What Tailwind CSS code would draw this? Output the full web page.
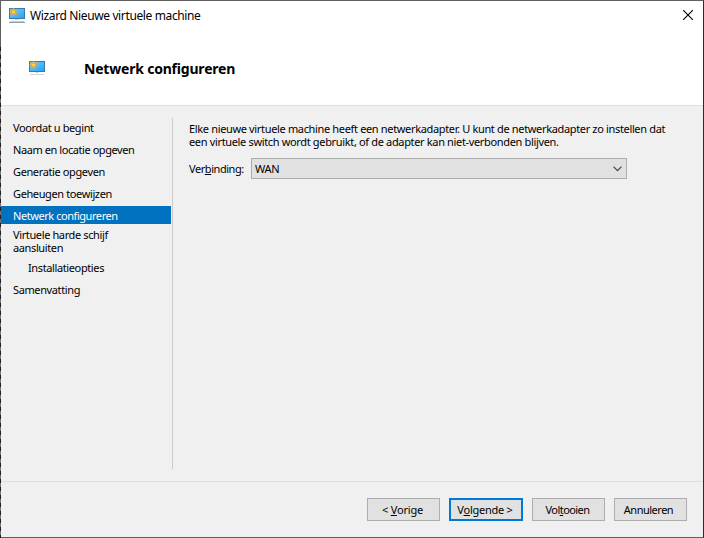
<!DOCTYPE html>
<html lang="nl"><head><meta charset="utf-8"><title>Wizard Nieuwe virtuele machine</title>
<script src="https://cdn.jsdelivr.net/npm/@tailwindcss/browser@4"></script></head>
<body class="overflow-hidden">
<div class="relative flex h-[538px] w-[704px] flex-col border border-[#5f5f5f] border-r-[#2b2b2b] bg-[#f0f0f0] font-['Noto_Sans',sans-serif] text-[11px] leading-[13px] text-black">
  <div class="absolute -left-px top-[46px] h-[491px] w-px bg-[repeating-linear-gradient(180deg,#1c1a1c_0px,#1c1a1c_4px,#757575_4px,#757575_8px)]"></div>
  <header class="h-[105px] shrink-0 border-b border-[#dfdfdf] bg-white">
    <div class="flex h-[29px] items-center pl-2">
      <svg class="mb-px h-4 w-4" viewBox="0 0 16 16"><defs><linearGradient id="s" x1="0" y1="0" x2="1" y2="1"><stop offset="0" stop-color="#7accf8"/><stop offset="1" stop-color="#1ea4fb"/></linearGradient></defs><path d="M0 1h16v11H0z" fill="#3c789f"/><path d="M1 2h14v9H1z" fill="url(#s)"/><path d="M6 12h4v1H6z" fill="#c5ced5"/><path d="M1 14h14v1H1z" fill="#c3ccd3"/><path d="M0 15h16v1H0z" fill="#8da0af"/><path d="M4.500 1v8M.5 5h8M1.500 2l6 6M7.500 2l-6 6" stroke="#f5a623" stroke-width="1.300"/><circle cx="4.500" cy="5" r="2.500" fill="#f5a623"/><circle cx="4.500" cy="5" r="1.400" fill="#ffd45a"/></svg>
      <span class="ml-[5px] whitespace-nowrap text-[12px] leading-4 tracking-[-0.37px]">Wizard Nieuwe virtuele machine</span>
      <svg class="mb-px ml-auto mr-[10px] h-[10px] w-[10px]" viewBox="0 0 10 10"><path d="M0 0L10 10M10 0L0 10" stroke="#000" stroke-width="1.100"/></svg>
    </div>
    <div class="flex h-[75px] items-start pl-7 pt-[30px]">
      <svg class="h-4 w-4" viewBox="0 0 16 16"><path d="M0 1h16v11H0z" fill="#3c789f"/><path d="M1 2h14v9H1z" fill="url(#s)"/><path d="M7 12h2v1H7z" fill="#b8c4cc"/><path d="M1 14h14v1H1z" fill="#ccd3d9"/><path d="M4.500 1v8M.5 5h8M1.500 2l6 6M7.500 2l-6 6" stroke="#f5a623" stroke-width="1.300"/><circle cx="4.500" cy="5" r="2.500" fill="#f5a623"/><circle cx="4.500" cy="5" r="1.400" fill="#ffd45a"/></svg>
      <h1 class="ml-[39px] whitespace-nowrap text-[14px] font-bold leading-[18px] tracking-[-0.2px]">Netwerk configureren</h1>
    </div>
  </header>
  <main class="flex h-[376px] shrink-0 border-b border-[#dfdfdf]">
    <nav class="mt-3 h-[351px] w-[172px] shrink-0 border-r border-[#cbcbcb] pr-px">
      <ul class="whitespace-nowrap tracking-[-0.38px]">
        <li class="flex h-[22px] items-center pb-1 pl-3"><span>Voordat u begint</span></li>
        <li class="flex h-[22px] items-center pb-1 pl-3"><span class="tracking-[-0.43px]">Naam en locatie opgeven</span></li>
        <li class="flex h-[22px] items-center pb-1 pl-3"><span>Generatie opgeven</span></li>
        <li class="flex h-[22px] items-center pb-1 pl-3"><span>Geheugen toewijzen</span></li>
        <li class="flex h-[18px] items-center bg-[#0072c0] pl-3 text-white"><span class="tracking-[-0.44px]">Netwerk configureren</span></li>
        <li class="pl-3 pt-1">Virtuele harde schijf<br>aansluiten</li>
        <li class="pl-[27px] pt-[7px]">Installatieopties</li>
        <li class="pl-3 pt-[9px]">Samenvatting</li>
      </ul>
    </nav>
    <section class="whitespace-nowrap pl-4 pt-4">
      <p class="tracking-[-0.343px]">Elke nieuwe virtuele machine heeft een netwerkadapter. U kunt de netwerkadapter zo instellen dat<br>een virtuele switch wordt gebruikt, of de adapter kan niet-verbonden blijven.</p>
      <div class="mt-[10px] flex items-center">
        <label class="w-[62px] tracking-[-0.44px]">Ver<u>b</u>inding:</label>
        <div class="flex h-[21px] w-[376px] items-center justify-between border border-[#adadad] bg-[#e1e1e1] pl-[3px] pr-1"><span class="tracking-[-0.3px]">WAN</span><svg class="h-[6px] w-[9px]" viewBox="0 0 9 6"><path d="M.5 .7L4.500 4.700L8.500 .7" fill="none" stroke="#444" stroke-width="1.200"/></svg></div>
      </div>
    </section>
  </main>
  <footer class="flex justify-end gap-[9px] pr-4 pt-4">
    <button class="h-[23px] w-[73px] border border-[#adadad] bg-[#e1e1e1] pr-0.5 tracking-[-0.2px]">&lt; <u>V</u>orige</button>
    <button class="h-[23px] w-[74px] border-2 border-[#0078d7] bg-[#e1e1e1] pr-0.5 tracking-[-0.25px]">V<u>o</u>lgende &gt;</button>
    <button class="h-[23px] w-[73px] border border-[#adadad] bg-[#e1e1e1] pr-0.5 tracking-[-0.55px]">Vol<u>t</u>ooien</button>
    <button class="h-[23px] w-[73px] border border-[#adadad] bg-[#e1e1e1] pr-1 tracking-[-0.5px]">Annuleren</button>
  </footer>
</div>
</body></html>
